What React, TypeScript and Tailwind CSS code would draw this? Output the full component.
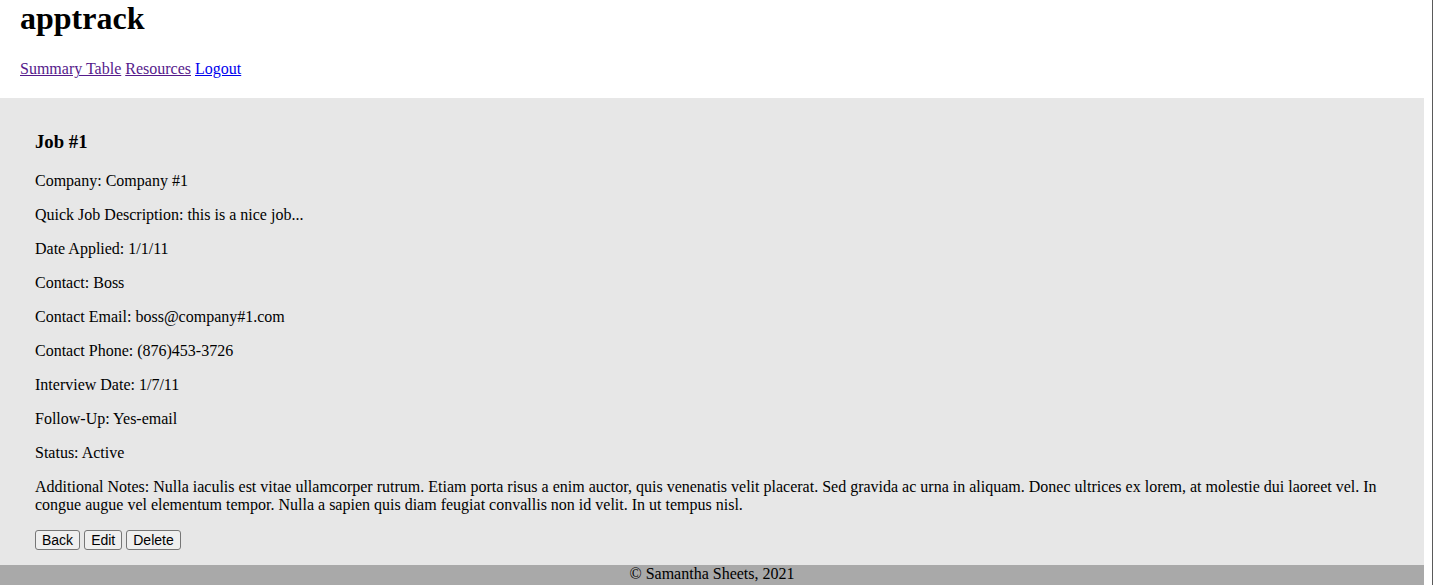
import React from "react";

const serif = "font-['Liberation_Serif','Times_New_Roman',serif]";

function Btn({ children }: { children: React.ReactNode }) {
  return (
    <button className="font-['Liberation_Sans',Arial,sans-serif] text-[14px] leading-[16px] px-[6px] py-[1px] bg-[#efefef] border border-[#767676] rounded-[3px] text-black">
      {children}
    </button>
  );
}

export default function App() {
  const rows = [
    "Company: Company #1",
    "Quick Job Description: this is a nice job...",
    "Date Applied: 1/1/11",
    "Contact: Boss",
    "Contact Email: boss@company#1.com",
    "Contact Phone: (876)453-3726",
    "Interview Date: 1/7/11",
    "Follow-Up: Yes-email",
    "Status: Active",
  ];
  return (
    <div className={`${serif} w-[1433px] min-h-[585px] border-r border-[#5a5a5a] bg-white text-black text-[16px] leading-[18px] overflow-hidden`}>
      <div className="w-[1424px]">
        <header className="pl-[20px] pb-[19px]">
          <h1 className="text-[32px] leading-[37px] font-bold m-0 mb-[23.4px]">apptrack</h1>
          <nav className="leading-[18.4px]">
            <a href="#" className="underline text-[#551a8b]">Summary Table</a>{" "}
            <a href="#" className="underline text-[#551a8b]">Resources</a>{" "}
            <a href="#" className="underline text-[#0000ee]">Logout</a>
          </nav>
        </header>
        <main className="bg-[#e7e7e7] px-[35px] pt-[15px] pb-[15px]">
          <h3 className="text-[18.72px] leading-[21.5px] font-bold mt-[18.7px] mb-[18.7px]">Job #1</h3>
          {rows.map((r) => (
            <p key={r} className="mb-[16px]">{r}</p>
          ))}
          <p className="mb-[16px]">
            Additional Notes: Nulla iaculis est vitae ullamcorper rutrum. Etiam porta risus a enim auctor, quis venenatis velit placerat. Sed gravida ac urna in aliquam. Donec ultrices ex lorem, at molestie dui laoreet vel. In congue augue vel elementum tempor. Nulla a sapien quis diam feugiat convallis non id velit. In ut tempus nisl.
          </p>
          <div className="flex gap-[4px] h-[20px] items-start">
            <Btn>Back</Btn>
            <Btn>Edit</Btn>
            <Btn>Delete</Btn>
          </div>
        </main>
        <footer className="bg-[#a9a9a9] text-center h-[22px] leading-[18.4px]">© Samantha Sheets, 2021</footer>
      </div>
    </div>
  );
}
